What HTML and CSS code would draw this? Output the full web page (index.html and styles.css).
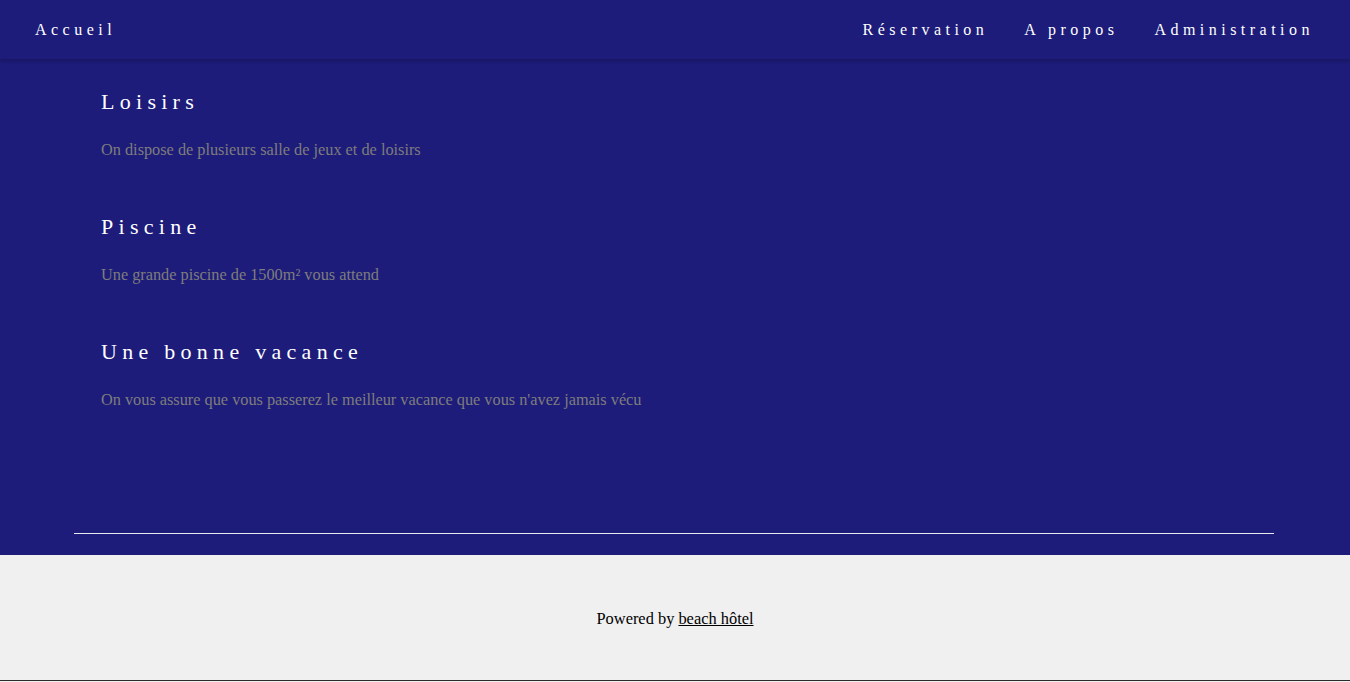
FILE: index.html
```html
<!DOCTYPE html>
<html lang="fr">
<head>
<meta charset="utf-8">
<title>Beach hôtel</title>
<link rel="stylesheet" href="styles.css">
</head>
<body>
<div class="page">
  <nav class="topbar">
    <a class="nav-link" href="#">Accueil</a>
    <div class="nav-right">
      <a class="nav-link" href="#">Réservation</a>
      <a class="nav-link" href="#">A propos</a>
      <a class="nav-link" href="#">Administration</a>
    </div>
  </nav>
  <main class="content">
    <section class="feature">
      <h2 class="feature-title">Loisirs</h2>
      <p class="feature-text">On dispose de plusieurs salle de jeux et de loisirs</p>
    </section>
    <section class="feature">
      <h2 class="feature-title">Piscine</h2>
      <p class="feature-text">Une grande piscine de 1500m² vous attend</p>
    </section>
    <section class="feature">
      <h2 class="feature-title">Une bonne vacance</h2>
      <p class="feature-text">On vous assure que vous passerez le meilleur vacance que vous n'avez jamais vécu</p>
    </section>
  </main>
  <div class="rule-wrap"><hr class="rule"></div>
</div>
<footer class="footer">
  <p>Powered by <a href="#">beach hôtel</a></p>
</footer>
</body>
</html>
```

FILE: styles.css
```css
html, body {
  margin: 0;
  padding: 0;
  background: #f0f0f0;
  font-family: "Liberation Serif", "Times New Roman", serif;
}

.page {
  background: #1d1c7a;
  height: 555px;
  display: flex;
  flex-direction: column;
}

.topbar {
  height: 59px;
  display: flex;
  align-items: center;
  justify-content: space-between;
  padding: 0 36px 0 35px;
  background: #1d1c7a;
  box-shadow: 0 2px 4px rgba(0, 0, 0, 0.22);
  position: relative;
  z-index: 1;
}

.nav-right {
  display: flex;
  gap: 36px;
}

.nav-link {
  color: #ffffff;
  text-decoration: none;
  font-size: 16px;
  letter-spacing: 0.28em;
  line-height: 20px;
  padding-top: 1px;
}

.content {
  padding: 28px 0 0 101px;
  flex: 1;
}

.feature {
  height: 125px;
}

.feature-title {
  margin: 0;
  color: #ffffff;
  font-weight: normal;
  font-size: 22px;
  letter-spacing: 0.24em;
  line-height: 30px;
}

.feature-text {
  margin: 23px 0 0;
  color: #7d7d7d;
  font-size: 16.3px;
  line-height: 20px;
}

.rule-wrap {
  padding: 0 76px 21px 74px;
}

.rule {
  margin: 0;
  border: 0;
  height: 1px;
  background: #e8e8f0;
}

.footer {
  height: 126px;
  box-sizing: border-box;
  border-bottom: 1px solid #2b2b2b;
  display: flex;
  align-items: center;
  justify-content: center;
  color: #000000;
  font-size: 16.4px;
}

.footer p {
  margin: 0;
  padding-top: 2px;
}

.footer a {
  color: #000000;
}
```
